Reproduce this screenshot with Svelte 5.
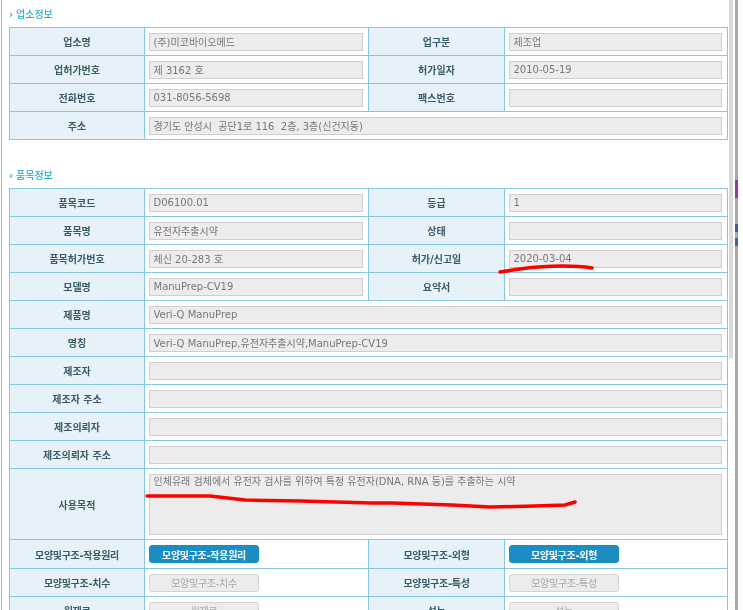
<script>
  const shop = [
    [['업소명', '(주)미코바이오메드'], ['업구분', '제조업']],
    [['업허가번호', '제 3162 호'], ['허가일자', '2010-05-19']],
    [['전화번호', '031-8056-5698'], ['팩스번호', '']]
  ];
  const itemPairs = [
    [['품목코드', 'D06100.01'], ['등급', '1']],
    [['품목명', '유전자추출시약'], ['상태', '']],
    [['품목허가번호', '체신 20-283 호'], ['허가/신고일', '2020-03-04']],
    [['모델명', 'ManuPrep-CV19'], ['요약서', '']]
  ];
  const itemWide = [
    ['제품명', 'Veri-Q ManuPrep'],
    ['명칭', 'Veri-Q ManuPrep,유전자추출시약,ManuPrep-CV19'],
    ['제조자', ''],
    ['제조자 주소', ''],
    ['제조의뢰자', ''],
    ['제조의뢰자 주소', '']
  ];
  const buttons = [
    [['모양및구조-작용원리', true], ['모양및구조-외형', true]],
    [['모양및구조-치수', false], ['모양및구조-특성', false]],
    [['원재료', false], ['성능', false]]
  ];
  const purpose = '인체유래 검체에서 유전자 검사를 위하여 특정 유전자(DNA, RNA 등)를 추출하는 시약';
</script>

{#snippet cols()}
  <colgroup>
    <col class="c1" /><col class="c2" /><col class="c3" /><col class="c4" />
  </colgroup>
{/snippet}

{#snippet pair(row)}
  <tr>
    {#each row as cell}
      <th>{cell[0]}</th>
      <td><input readonly value={cell[1]} /></td>
    {/each}
  </tr>
{/snippet}

{#snippet wide(row)}
  <tr>
    <th>{row[0]}</th>
    <td colspan="3"><input readonly value={row[1]} /></td>
  </tr>
{/snippet}

<div class="screen">
  <div class="edge-left"></div>
  <main class="content">
    <h2 class="first">업소정보</h2>
    <table>
      {@render cols()}
      <tbody>
        {#each shop as row}
          {@render pair(row)}
        {/each}
        {@render wide(['주소', '경기도 안성시  공단1로 116  2층, 3층(신건지동)'])}
      </tbody>
    </table>

    <h2 class="second">품목정보</h2>
    <table>
      {@render cols()}
      <tbody>
        {#each itemPairs as row}
          {@render pair(row)}
        {/each}
        {#each itemWide as row}
          {@render wide(row)}
        {/each}
        <tr class="tall">
          <th>사용목적</th>
          <td colspan="3"><textarea readonly value={purpose}></textarea></td>
        </tr>
        {#each buttons as row, i}
          <tr class="btn-row" class:lead={i === 0}>
            {#each row as cell}
              <th>{cell[0]}</th>
              <td><button class:on={cell[1]}>{cell[0]}</button></td>
            {/each}
          </tr>
        {/each}
      </tbody>
    </table>
  </main>
  <div class="scroll"><div class="thumb"></div></div>
  <div class="strip">
    <i class="gap a"></i><i class="purple"></i><i class="gap b"></i><i class="blue"></i><i class="gap c"></i><i class="blue"></i>
  </div>

  <svg class="marks" width="743" height="610" viewBox="0 0 743 610" aria-hidden="true">
    <path d="M500 272 C512 270 525 268 539 267 S572 265 592 268" />
    <path d="M147 496 L210 496 L245 500 L300 501 L372 503 L392 503 L452 505 L490 507 L535 506 L565 505 L575 502" />
  </svg>
</div>

<style>
  :global(body) { margin: 0; background: #fff; }

  .screen {
    position: relative;
    display: flex;
    width: 743px;
    height: 610px;
    overflow: hidden;
    background: #fff;
    filter: blur(0.4px);
    font-family: "DejaVu Sans", "Noto Sans CJK KR", sans-serif;
    font-size: 10px;
  }

  .edge-left {
    flex: none;
    width: 1px;
    margin-left: 1px;
    background: #b4b4b4;
  }

  .content {
    flex: none;
    width: 727px;
    padding-left: 7px;
    box-sizing: border-box;
  }

  h2 {
    margin: 0;
    height: 12px;
    font-size: 10px;
    line-height: 12px;
    font-weight: 500;
    color: #26aecb;
    padding-left: 7px;
    position: relative;
  }
  h2::before {
    content: "›";
    position: absolute;
    left: 0;
    top: 0;
    font-weight: 700;
  }
  h2.first { margin-top: 9px; margin-bottom: 6px; }
  h2.second { margin-top: 30px; margin-bottom: 6px; }

  table {
    width: 718px;
    table-layout: fixed;
    border-collapse: collapse;
    border: 1px solid #85c6e0;
  }
  .c1 { width: 135px; }
  .c2 { width: 224px; }
  .c3 { width: 136px; }
  .c4 { width: 223px; }

  tr { height: 28px; }
  tr.tall { height: 71px; }
  tr.lead { height: 29px; }

  th, td {
    border: 1px solid #85c6e0;
    padding: 0;
  }
  th {
    background: #e6f2f8;
    color: #3a5a67;
    font-weight: 700;
    font-size: 10px;
    text-align: center;
  }
  td { padding: 0 5px 0 4px; }

  .btn-row th { letter-spacing: -0.3px; }

  input, textarea {
    display: block;
    box-sizing: border-box;
    width: 100%;
    margin: 0;
    padding: 0 3.5px;
    border: 1px solid #cfcfcf;
    border-radius: 0;
    background: #ececec;
    color: #777;
    font: inherit;
    outline: none;
  }
  input { height: 18px; }
  textarea {
    height: 61px;
    padding-top: 1px;
    line-height: 12px;
    resize: none;
    overflow: hidden;
  }

  button {
    display: block;
    box-sizing: border-box;
    width: 110px;
    height: 18px;
    margin: 0;
    padding: 0;
    border: 1px solid #d4d4d4;
    border-radius: 3px;
    background: #ececec;
    color: #a8a8a8;
    font: inherit;
    letter-spacing: -0.3px;
  }
  button.on {
    border-color: #1b8cc4;
    background: #1b8cc4;
    color: #fff;
    font-weight: 700;
  }

  .scroll {
    flex: none;
    width: 4px;
  }
  .thumb { height: 358px; background: #dadada; }

  .strip {
    flex: none;
    display: flex;
    flex-direction: column;
    width: 3px;
    margin-left: 2px;
    background: #a8a8a8;
  }
  .strip i { display: block; flex: none; }
  .gap.a { height: 180px; }
  .purple { height: 18px; background: #8b3f9c; }
  .gap.b { height: 26px; }
  .blue { height: 8px; background: #3f5f9f; }
  .gap.c { height: 6px; }

  .marks {
    position: absolute;
    left: 0;
    top: 0;
    pointer-events: none;
  }
  .marks path {
    fill: none;
    stroke: #f00;
    stroke-width: 3.5;
    stroke-linecap: round;
    stroke-linejoin: round;
  }
</style>
